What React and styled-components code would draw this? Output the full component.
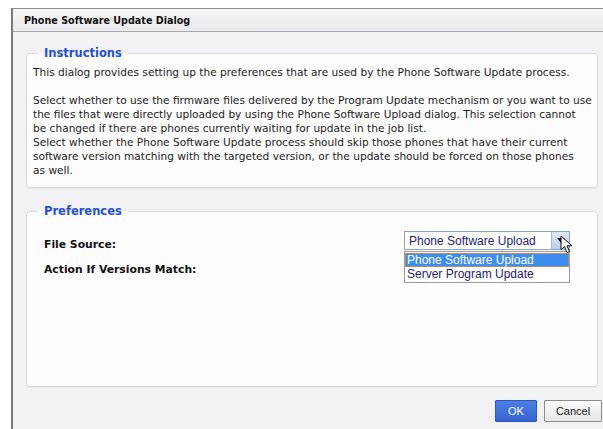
import React from "react";
import styled, { createGlobalStyle } from "styled-components";

const GlobalStyle = createGlobalStyle`
  html, body {
    margin: 0;
    padding: 0;
    background: #ffffff;
    overflow: hidden;
  }
  body {
    font-family: "DejaVu Sans", Tahoma, sans-serif;
  }
`;

const Dialog = styled.div`
  margin: 8px 0 0 11px;
  width: 600px;
  height: 440px;
  background: #f2f1f3;
  border-top: 1px solid #8e8e8e;
  border-left: 2px solid #7a7a7a;
  display: flex;
  flex-direction: column;
`;

const TitleBar = styled.div`
  height: 23px;
  display: flex;
  align-items: center;
  padding: 1px 0 0 11px;
  box-sizing: border-box;
  background: linear-gradient(#f6f6f7, #e9e9eb);
  border-bottom: 1px solid #a9a9ab;
  font-size: 9.6px;
  font-weight: bold;
  color: #111;
`;

const Body = styled.div`
  padding: 14px 15px 0 13px;
  display: flex;
  flex-direction: column;
  gap: 16px;
`;

const Group = styled.fieldset`
  margin: 0;
  padding: 0 0 0 6px;
  height: ${(p) => p.$height};
  box-sizing: border-box;
  border: 1px solid #dadadc;
  border-radius: 4px;
  background: #fdfdfd;
  box-shadow: 0 1px 0 #e6e6e8;
`;

const Legend = styled.legend`
  margin-left: 5px;
  padding: 0 6px;
  font-size: 11.5px;
  font-weight: bold;
  color: #2350d6;
  line-height: 14px;
`;

const Paragraph = styled.p`
  margin: 5px 0 0;
  font-size: 10.6px;
  line-height: 14px;
  color: #1c1c1c;
  white-space: nowrap;

  & + & {
    margin-top: 14px;
  }
`;

const Form = styled.div`
  display: grid;
  grid-template-columns: 360px 166px;
  row-gap: 2px;
  padding: 13px 0 0 11px;
  align-items: start;
`;

const Label = styled.div`
  margin-top: 4px;
  font-size: 10.8px;
  font-weight: bold;
  color: #111;
  height: 19px;
  line-height: 19px;
`;

const SelectWrap = styled.div`
  position: relative;
  height: 19px;
`;

const SelectBox = styled.div`
  height: 19px;
  box-sizing: border-box;
  border: 1px solid #8da2c0;
  background: #fff;
  display: flex;
  align-items: center;
  justify-content: space-between;
  font-family: "Liberation Sans", Arial, sans-serif;
  font-size: 12px;
  color: #1e1e78;
  padding-left: 4px;
`;

const ArrowButton = styled.div`
  width: 17px;
  height: 17px;
  background: linear-gradient(#dfe8f7, #b9cdee);
  border-left: 1px solid #a9bbdb;
  display: flex;
  align-items: center;
  justify-content: center;

  &::before {
    content: "";
    border-left: 4px solid transparent;
    border-right: 4px solid transparent;
    border-top: 5px solid #111;
  }
`;

const OptionList = styled.div`
  position: absolute;
  top: 20px;
  left: 0;
  width: 166px;
  box-sizing: border-box;
  border: 1px solid #9a9a9a;
  background: #fff;
  padding: 1px 0;
`;

const Option = styled.div`
  height: 14px;
  line-height: 14px;
  padding-left: 2px;
  font-family: "Liberation Sans", Arial, sans-serif;
  font-size: 12px;
  color: ${(p) => (p.$active ? "#fff" : "#1e1e78")};
  background: ${(p) => (p.$active ? "#3d8ef0" : "transparent")};
  box-shadow: ${(p) => (p.$active ? "inset 0 0 0 1px #c08a5a" : "none")};
`;

const Pointer = styled.svg`
  position: absolute;
  left: 156px;
  top: 4px;
`;

const Footer = styled.div`
  display: flex;
  justify-content: flex-end;
  gap: 7px;
  padding: 13px 11px 0 0;
`;

const Button = styled.button`
  height: 22px;
  min-width: ${(p) => p.$width};
  padding: 0;
  font-family: "Liberation Sans", Arial, sans-serif;
  font-size: 11px;
  border-radius: 1px;
  border: 1px solid ${(p) => (p.$primary ? "#2f58b8" : "#8c8c8c")};
  color: ${(p) => (p.$primary ? "#ffffff" : "#1a1a1a")};
  background: ${(p) =>
    p.$primary
      ? "linear-gradient(#4b7fe4, #3565d2)"
      : "linear-gradient(#fbfbfb, #e7e7e7)"};
`;

export default function App() {
  return (
    <>
      <GlobalStyle />
      <Dialog>
        <TitleBar>Phone Software Update Dialog</TitleBar>
        <Body>
          <Group $height="142px">
            <Legend>Instructions</Legend>
            <Paragraph>
              This dialog provides setting up the preferences that are used by
              the Phone Software Update process.
            </Paragraph>
            <Paragraph>
              Select whether to use the firmware files delivered by the Program
              Update mechanism or you want to use
              <br />
              the files that were directly uploaded by using the Phone Software
              Upload dialog. This selection cannot
              <br />
              be changed if there are phones currently waiting for update in the
              job list.
              <br />
              Select whether the Phone Software Update process should skip those
              phones that have their current
              <br />
              software version matching with the targeted version, or the update
              should be forced on those phones
              <br />
              as well.
            </Paragraph>
          </Group>
          <Group $height="183px">
            <Legend>Preferences</Legend>
            <Form>
              <Label>File Source:</Label>
              <SelectWrap>
                <SelectBox>
                  Phone Software Upload
                  <ArrowButton />
                </SelectBox>
                <OptionList>
                  <Option $active>Phone Software Upload</Option>
                  <Option>Server Program Update</Option>
                </OptionList>
                <Pointer width="13" height="20" viewBox="0 0 13 20">
                  <path
                    d="M1 1 L1 15 L4.5 11.5 L7 17.5 L9.5 16.5 L7 10.8 L12 10.8 Z"
                    fill="#fff"
                    stroke="#111"
                    strokeWidth="1"
                    strokeLinejoin="round"
                  />
                </Pointer>
              </SelectWrap>
              <Label>Action If Versions Match:</Label>
              <div />
            </Form>
          </Group>
        </Body>
        <Footer>
          <Button $primary $width="42px">OK</Button>
          <Button $width="58px">Cancel</Button>
        </Footer>
      </Dialog>
    </>
  );
}
